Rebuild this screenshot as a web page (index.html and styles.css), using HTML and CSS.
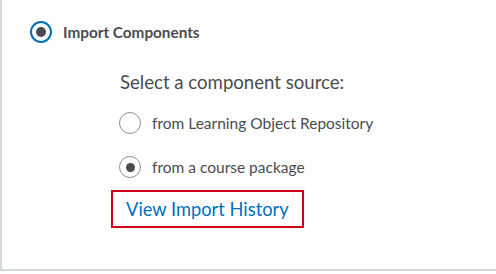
FILE: index.html
```html
<!DOCTYPE html>
<html>

<head>
    <link rel="stylesheet" href="styles.css">
    <title>Import Components</title>
</head>

<body>
    <div class="panel">
        <label class="choice-main">
            <span class="radio radio-main checked"></span>
            <span class="choice-label">Import Components</span>
        </label>

        <div class="sources">
            <div class="sources-title">Select a component source:</div>

            <label class="option option-first">
                <span class="radio"></span>
                <span>from Learning Object Repository</span>
            </label>

            <label class="option">
                <span class="radio checked"></span>
                <span>from a course package</span>
            </label>

            <a class="history-link" href="#">View Import History</a>
        </div>
    </div>
</body>

</html>
```

FILE: styles.css
```css
body {
    margin: 0;
    background: #ffffff;
    font-family: Lato, "Liberation Sans", sans-serif;
    color: #494c4e;
}

.panel {
    height: 248px;
    padding: 21px 0 0 28px;
    border-left: 2px solid #d3d9de;
    border-bottom: 2px solid #d3d9de;
}

.choice-main {
    display: flex;
    align-items: center;
    gap: 11px;
    height: 22px;
}

.choice-label {
    font-size: 15.3px;
    font-weight: 700;
}

.radio {
    box-sizing: border-box;
    width: 22px;
    height: 22px;
    border: 1.5px solid #8c9295;
    border-radius: 50%;
    display: flex;
    align-items: center;
    justify-content: center;
    background: #ffffff;
}

.radio.checked::after {
    content: "";
    width: 9px;
    height: 9px;
    border-radius: 50%;
    background: #494c4e;
}

.radio-main {
    border: 2px solid #006fbf;
}

.radio-main.checked::after {
    width: 10px;
    height: 10px;
}

.sources {
    margin-left: 81px;
}

.sources-title {
    margin-top: 27px;
    padding-left: 9px;
    font-size: 18.6px;
    line-height: 24px;
}

.option {
    display: flex;
    align-items: center;
    gap: 11px;
    height: 22px;
    margin-top: 22px;
    padding-left: 8px;
    font-size: 15.5px;
}

.option-first {
    margin-top: 18px;
}

.history-link {
    display: inline-block;
    margin-top: 12px;
    padding: 6px 13px 6px;
    border: 2px solid #d0021b;
    font-size: 18.3px;
    line-height: 22px;
    color: #006fbf;
    text-decoration: none;
}
```
